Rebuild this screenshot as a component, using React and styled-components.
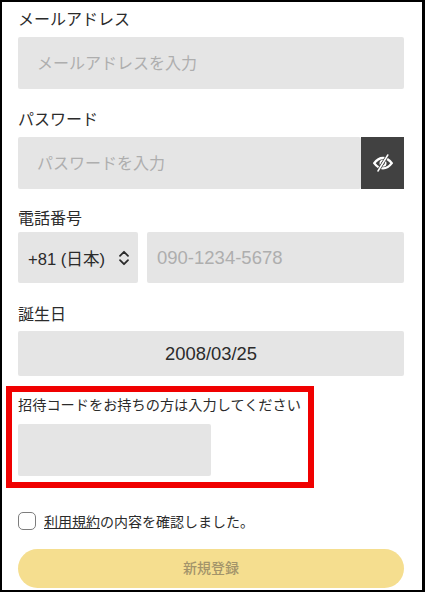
import styled, { createGlobalStyle } from "styled-components";

const GlobalStyle = createGlobalStyle`
  html, body {
    margin: 0;
    padding: 0;
    background: #000;
  }
  * {
    box-sizing: border-box;
  }
`;

const Frame = styled.div`
  width: 425px;
  height: 592px;
  overflow: hidden;
  background: #fff;
  border: solid #000;
  border-width: 2px 3px 2px 2px;
  padding: 0 18px 0 16px;
  font-family: "Liberation Sans", "Noto Sans CJK JP", sans-serif;
  color: #2b2b2b;
`;

const Field = styled.div`
  margin-top: ${(props) => props.$top}px;
`;

const Label = styled.div`
  font-size: 16px;
  line-height: 24px;
  height: 24px;
  margin-bottom: ${(props) => props.$gap}px;
`;

const Input = styled.div`
  height: ${(props) => props.$height || 52}px;
  width: ${(props) => props.$width || "100%"};
  flex: ${(props) => (props.$grow ? 1 : "none")};
  display: flex;
  align-items: center;
  padding-left: ${(props) => props.$pad || 19}px;
  padding-bottom: 2px;
  background: #e5e5e5;
  border-radius: 2px;
  font-size: 16px;
  color: #aeaeae;
`;

const PasswordRow = styled.div`
  display: flex;
`;

const EyeButton = styled.div`
  width: 43px;
  height: 52px;
  background: #414141;
  display: flex;
  align-items: center;
  justify-content: center;
`;

const PhoneRow = styled.div`
  display: flex;
  gap: 9px;
`;

const CountrySelect = styled(Input)`
  width: 120px;
  height: 51px;
  padding: 0 8px 0 10px;
  justify-content: space-between;
  color: #2b2b2b;
  font-size: 16.6px;
`;

const PhoneInput = styled(Input)`
  height: 51px;
  padding-left: 10px;
  padding-bottom: 0;
  font-size: 18.5px;
`;

const DateBox = styled(Input)`
  height: 45px;
  padding: 0;
  justify-content: center;
  color: #2b2b2b;
  font-size: 18.4px;
`;

const InviteBox = styled.div`
  width: 308px;
  height: 102px;
  margin: 10px 0 0 -12px;
  border: 6px solid #f00000;
  padding: 0 6px;
`;

const InviteLabel = styled.div`
  font-size: 14.2px;
  line-height: 20px;
  margin-top: 3px;
  margin-bottom: 9px;
  white-space: nowrap;
`;

const CheckRow = styled.div`
  display: flex;
  align-items: center;
  gap: 8px;
  margin-top: 22px;
  height: 22px;
  font-size: 14px;
`;

const CheckBox = styled.span`
  width: 18px;
  height: 18px;
  background: #fff;
  border: 1.5px solid #7d7d7d;
  border-radius: 5px;
`;

const TermsLink = styled.span`
  text-decoration: underline;
`;

const SubmitButton = styled.div`
  margin-top: 17px;
  height: 39px;
  padding-bottom: 3px;
  border-radius: 20px;
  background: #f5de8f;
  color: #a3946a;
  font-size: 14px;
  font-weight: 500;
  display: flex;
  align-items: center;
  justify-content: center;
`;

const EyeSlashIcon = () => (
  <svg width="20" height="20" viewBox="0 0 20 20" fill="none" stroke="#fff" strokeLinecap="round">
    <path d="M1.2 10.2C3.8 6.6 6.8 5 10 5s6.2 1.6 8.8 5.2C16.2 13.8 13.2 15.4 10 15.4s-6.2-1.6-8.8-5.2Z" strokeWidth="2.3" />
    <circle cx="10" cy="10.2" r="2.6" strokeWidth="1.8" />
    <path d="M14.8 2 5 18" stroke="#414141" strokeWidth="3.2" />
    <path d="M14.8 2 5 18" strokeWidth="1.5" />
  </svg>
);

const ChevronsIcon = () => (
  <svg width="12" height="16" viewBox="0 0 12 16" fill="none" stroke="#2b2b2b" strokeWidth="1.8" strokeLinecap="round" strokeLinejoin="round">
    <path d="M2 5.8 6 1.8l4 4" />
    <path d="M2 10.2l4 4 4-4" />
  </svg>
);

const App = () => (
  <>
    <GlobalStyle />
    <Frame>
      <Field $top={6}>
        <Label $gap={5}>メールアドレス</Label>
        <Input>メールアドレスを入力</Input>
      </Field>
      <Field $top={19}>
        <Label $gap={5}>パスワード</Label>
        <PasswordRow>
          <Input $grow>パスワードを入力</Input>
          <EyeButton>
            <EyeSlashIcon />
          </EyeButton>
        </PasswordRow>
      </Field>
      <Field $top={18}>
        <Label $gap={1}>電話番号</Label>
        <PhoneRow>
          <CountrySelect>
            +81 (日本)
            <ChevronsIcon />
          </CountrySelect>
          <PhoneInput $grow>090-1234-5678</PhoneInput>
        </PhoneRow>
      </Field>
      <Field $top={20}>
        <Label $gap={4}>誕生日</Label>
        <DateBox>2008/03/25</DateBox>
      </Field>
      <InviteBox>
        <InviteLabel>招待コードをお持ちの方は入力してください</InviteLabel>
        <Input $width="193px" />
      </InviteBox>
      <CheckRow>
        <CheckBox />
        <span>
          <TermsLink>利用規約</TermsLink>の内容を確認しました。
        </span>
      </CheckRow>
      <SubmitButton>新規登録</SubmitButton>
    </Frame>
  </>
);

export default App;
